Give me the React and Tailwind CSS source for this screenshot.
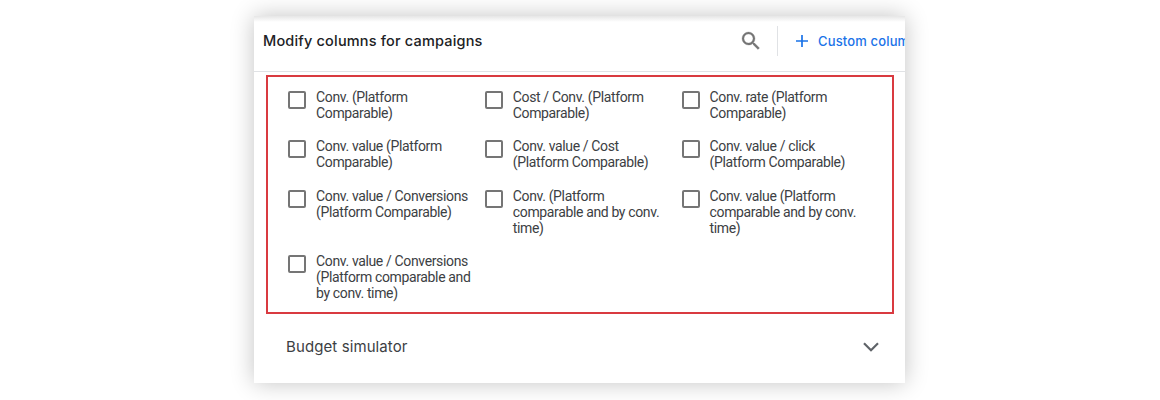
const COLUMNS = [
  ['Conv. (Platform', 'Comparable)'],
  ['Cost / Conv. (Platform', 'Comparable)'],
  ['Conv. rate (Platform', 'Comparable)'],
  ['Conv. value (Platform', 'Comparable)'],
  ['Conv. value / Cost', '(Platform Comparable)'],
  ['Conv. value / click', '(Platform Comparable)'],
  ['Conv. value / Conversions', '(Platform Comparable)'],
  ['Conv. (Platform', 'comparable and by conv.', 'time)'],
  ['Conv. value (Platform', 'comparable and by conv.', 'time)'],
  ['Conv. value / Conversions', '(Platform comparable and', 'by conv. time)'],
]

function SearchIcon() {
  return (
    <svg className="h-[24px] w-[24px] shrink-0" viewBox="0 0 24 24" fill="#757575" stroke="#757575" strokeWidth="0.3">
      <path d="M15.5 14h-.79l-.28-.27A6.471 6.471 0 0 0 16 9.5 6.5 6.5 0 1 0 9.5 16c1.61 0 3.09-.59 4.23-1.57l.27.28v.79l5 4.99L20.49 19l-4.99-5zm-6 0C7.01 14 5 11.99 5 9.5S7.01 5 9.5 5 14 7.01 14 9.5 11.99 14 9.5 14z" />
    </svg>
  )
}

function PlusIcon() {
  return (
    <svg className="h-3 w-3 shrink-0" viewBox="0 0 12 12" stroke="#1a73e8" strokeWidth="1.7">
      <path d="M6 0v12M0 6h12" />
    </svg>
  )
}

function ChevronIcon() {
  return (
    <svg className="h-[10px] w-4 shrink-0" viewBox="0 0 16 10" fill="none" stroke="#5f6368" strokeWidth="2.2">
      <path d="M1 1.2l7 7 7-7" />
    </svg>
  )
}

function ColumnOption({ lines }) {
  return (
    <label className="flex items-start gap-[10px]">
      <input
        type="checkbox"
        className="mt-[2px] h-[18px] w-[18px] shrink-0 appearance-none rounded-[2px] border-2 border-[#757575]"
      />
      <span className="text-[14px] leading-4 tracking-[-0.36px] whitespace-nowrap text-[#3c4043]">
        {lines.map((line) => (
          <span key={line} className="block">{line}</span>
        ))}
      </span>
    </label>
  )
}

export default function App() {
  return (
    <div className="flex h-[400px] w-[1160px] overflow-hidden bg-white pt-4 pl-[254px] font-['Roboto','Liberation_Sans',sans-serif]">
      <div className="flex h-[366.5px] w-[651px] shrink-0 flex-col overflow-hidden bg-white bg-linear-to-b from-[#e6e6e6] to-white to-[6px] shadow-[0_0_22px_rgba(0,0,0,0.24)]">
        {/* Header bar */}
        <div className="flex h-[56px] shrink-0 items-center border-b border-[#e0e2e5] pb-[5px] pl-[9px] font-['Inter','Roboto',sans-serif]">
          <h1 className="w-[476px] shrink-0 text-[14.5px] font-medium tracking-[0.18px] whitespace-nowrap text-[#202124]">
            Modify columns for campaigns
          </h1>
          <SearchIcon />
          <div className="ml-[14px] h-[30px] w-px shrink-0 bg-[#e0e2e5]" />
          <button className="ml-[18px] flex items-center gap-[10px] text-[13px] font-medium tracking-[0.15px] whitespace-nowrap text-[#1a73e8]">
            <PlusIcon />
            <span className="pt-px">Custom column</span>
          </button>
        </div>

        {/* Highlighted group of metrics */}
        <div className="mt-[3px] ml-3 h-[239px] w-[628px] shrink-0 border-2 border-[#d93a40] pt-[12.4px] pl-5">
          <div className="grid grid-cols-[196.8px_196.8px_196.8px] gap-y-[17.1px]">
            {COLUMNS.map((lines, i) => (
              <ColumnOption key={i} lines={lines} />
            ))}
          </div>
        </div>

        {/* Collapsed section */}
        <div className="flex flex-1 items-center justify-between pr-[26px] pb-[3px] pl-8 font-['Inter','Roboto',sans-serif]">
          <h2 className="text-[15px] tracking-[0.1px] text-[#3c4043]">Budget simulator</h2>
          <ChevronIcon />
        </div>
      </div>
    </div>
  )
}
